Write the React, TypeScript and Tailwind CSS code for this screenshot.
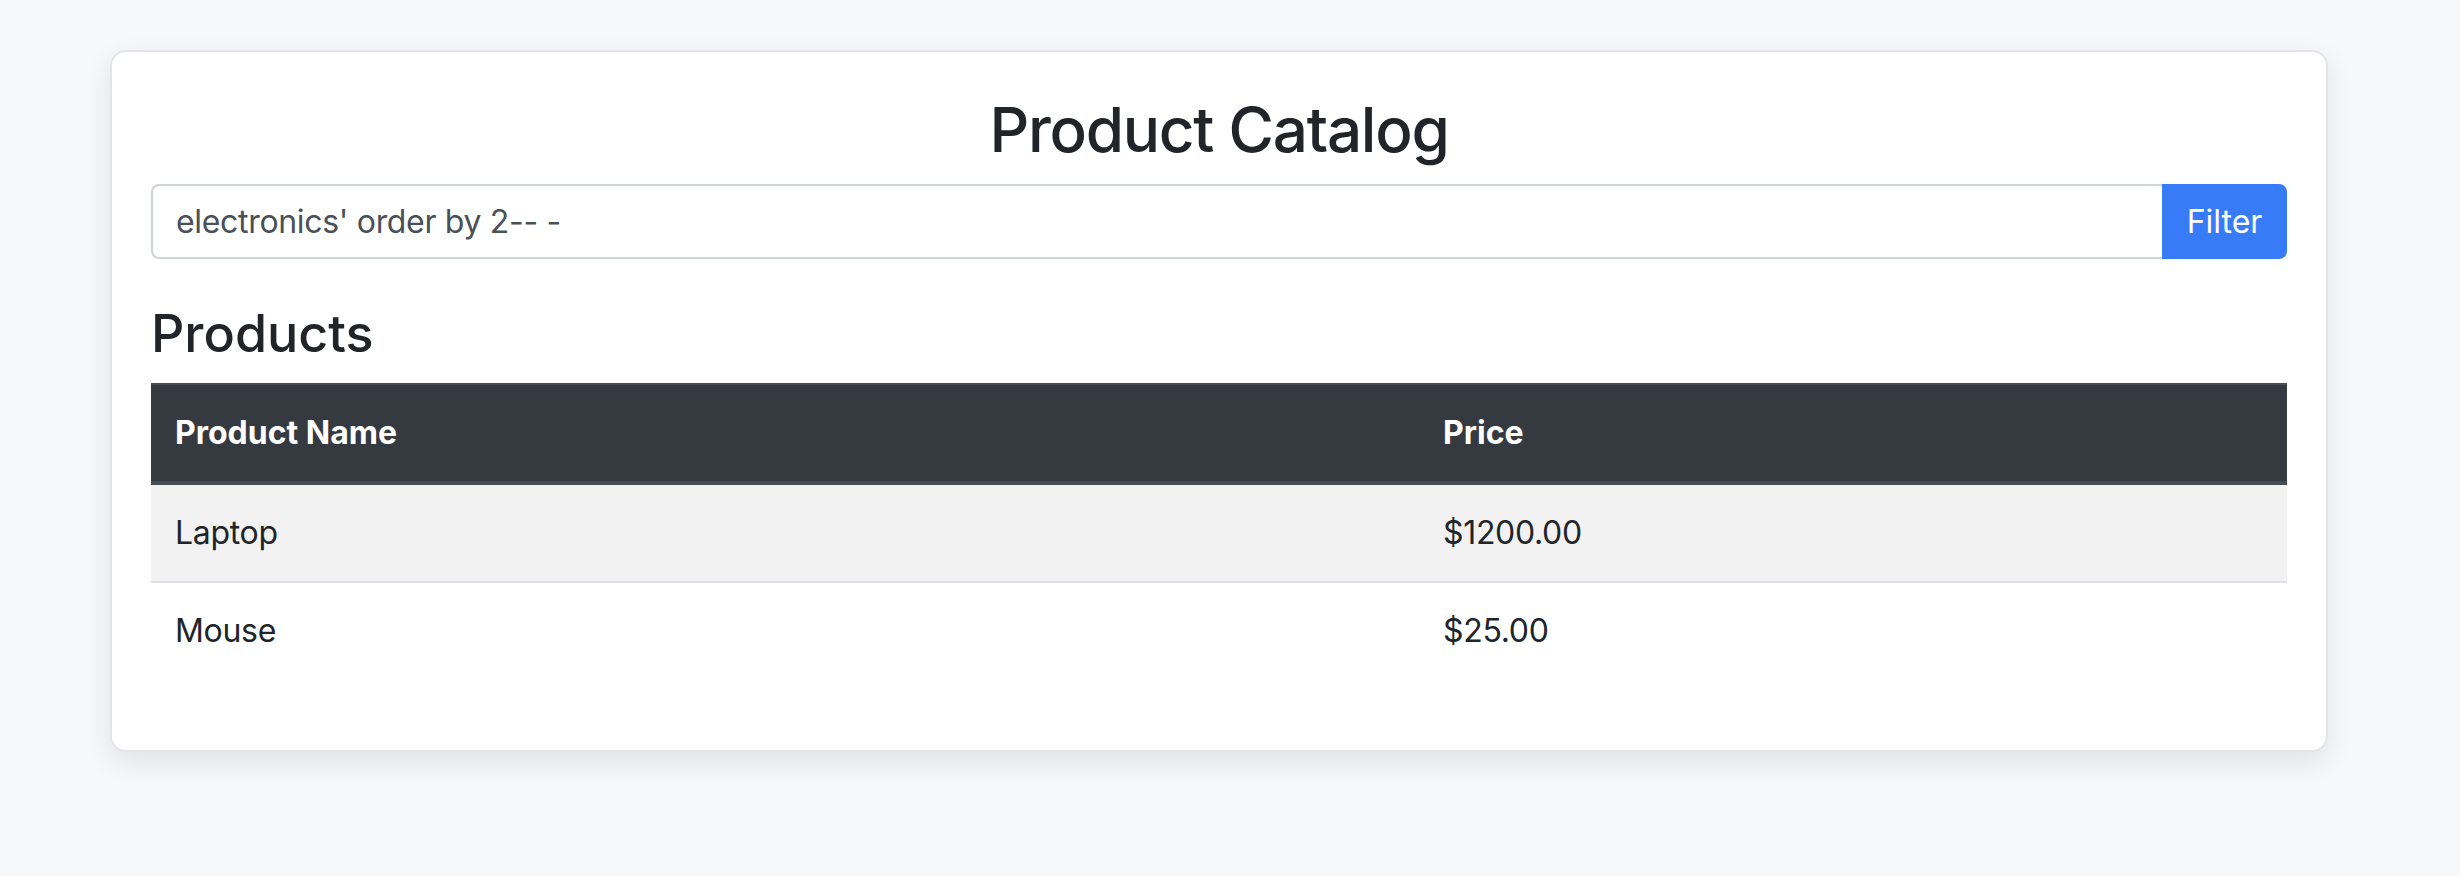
import { useState } from 'react';

const products = [
  { name: 'Laptop', price: 1200 },
  { name: 'Mouse', price: 25 },
];

export default function App() {
  const [category, setCategory] = useState("electronics' order by 2-- -");

  return (
    <main className="min-h-[876px] w-full bg-[#f7f8fa] pt-[50px] font-['Inter',sans-serif] text-[#212529]">
      <div className="ml-[110px] w-[2218px] rounded-[16px] border-2 border-[#e2e4e7] bg-white p-[39px] shadow-[0_10px_28px_rgba(0,0,0,0.09)]">
        <h1 className="mb-[16px] text-center text-[62px] font-medium leading-[77px] tracking-[-0.02em]">Product Catalog</h1>

        <form onSubmit={e => e.preventDefault()} className="flex h-[75px]">
          <input
            type="text"
            className="h-full flex-1 rounded-l-[8px] border-2 border-r-0 border-[#ced4da] bg-white px-[23px] text-[32px] tracking-[-0.01em] text-[#495057] outline-none"
            value={category}
            onChange={e => setCategory(e.target.value)}
          />
          <button type="submit" className="h-full w-[125px] rounded-r-[8px] bg-[#377cf6] text-[32px] text-white">
            Filter
          </button>
        </form>

        <h2 className="mt-[44px] mb-[18px] text-[52px] font-medium leading-[1.2]">Products</h2>

        <table className="mb-[32px] w-full border-collapse text-left text-[32px] leading-[48px]">
          <thead>
            <tr className="bg-[#343a40] text-white">
              <th className="w-[1268px] border-t-2 border-b-4 border-[#454d55] px-[24px] py-[24px] font-bold">Product Name</th>
              <th className="border-t-2 border-b-4 border-[#454d55] px-[24px] py-[24px] font-bold">Price</th>
            </tr>
          </thead>
          <tbody>
            {products.map((p, i) => (
              <tr key={p.name} className={i % 2 === 0 ? 'bg-[#f2f2f2]' : 'border-t-2 border-[#dee2e6] bg-white'}>
                <td className="px-[24px] py-[24px] tracking-[-0.01em]">{p.name}</td>
                <td className="px-[24px] py-[24px] tracking-[-0.01em]">${p.price.toFixed(2)}</td>
              </tr>
            ))}
          </tbody>
        </table>
      </div>
    </main>
  );
}
